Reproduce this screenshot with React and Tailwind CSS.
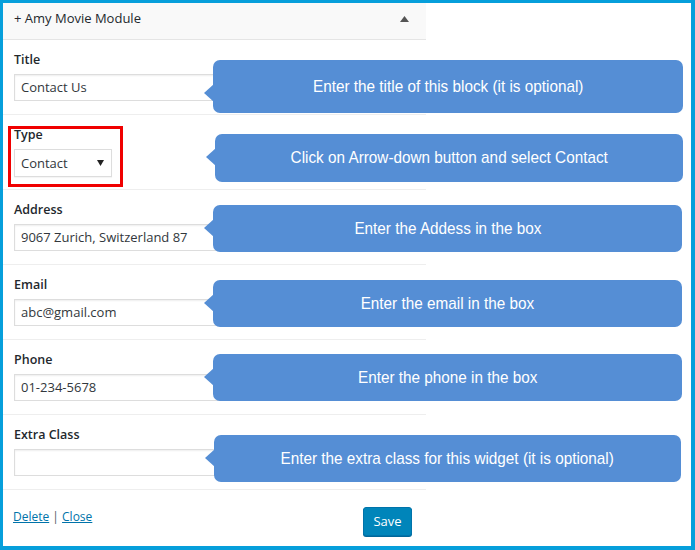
import React from "react";

function Field({ label, children, extra }) {
  return (
    <div className="relative h-[75px] border-b border-[#eeeeee] px-[11px] pt-[11px]">
      <div className="h-[18px] text-[12.5px] font-semibold leading-[18px] text-[#23282d]">{label}</div>
      <div className="mt-[5px]">{children}</div>
      {extra}
    </div>
  );
}

function TextInput({ value }) {
  return (
    <div className="flex h-[27px] w-full items-center border border-[#dddddd] bg-white px-[6px] pt-[1px] text-[13px] text-[#32373c] shadow-[inset_0_1px_2px_rgba(0,0,0,0.07)]">
      {value}
    </div>
  );
}

function Tip({ top }) {
  return (
    <svg className={"absolute left-[-9px] " + top} width="10" height="18" viewBox="0 0 10 18">
      <polygon points="10,0 0,9 10,18" fill="#558ed5" />
    </svg>
  );
}

function BubbleText({ children }) {
  return (
    <span className="inline-block origin-center scale-x-[0.9] whitespace-nowrap text-[17px] text-white [font-family:'Liberation_Sans',Arial,sans-serif]">
      {children}
    </span>
  );
}

export default function App() {
  return (
    <div className="relative h-[550px] w-[695px] overflow-hidden border-b-[4px] border-l-[3px] border-r-[4px] border-t-[3px] border-[#069fdb] bg-white [font-family:'Open_Sans',sans-serif]">
      <div className="flex w-[423px] flex-col">
        <div className="flex h-[37px] items-center justify-between border-b border-[#e5e5e5] bg-[#f9f9f9] pl-[11px] pr-[17px]">
          <span className="mb-[4px] text-[13px] text-[#23282d]">+ Amy Movie Module</span>
          <svg width="9" height="6" viewBox="0 0 9 6" className="mb-[5px]">
            <polygon points="4.5,0 9,6 0,6" fill="#555" />
          </svg>
        </div>
        <Field label="Title">
          <TextInput value="Contact Us" />
        </Field>
        <Field
          label="Type"
          extra={<div className="absolute left-[5px] top-[11px] h-[61px] w-[115px] border-[3px] border-[#f00000]" />}
        >
          <div className="flex h-[28px] w-[98px] items-center justify-between border border-[#dddddd] bg-white pl-[6px] pr-[7px] pt-[2px] text-[13px] text-[#32373c] shadow-[0_1px_1px_rgba(0,0,0,0.04)]">
            <span>Contact</span>
            <svg width="7" height="6" viewBox="0 0 7 6" className="mb-[3px]">
              <polygon points="0,0 7,0 3.5,6" fill="#222" />
            </svg>
          </div>
        </Field>
        <Field label="Address">
          <TextInput value="9067 Zurich, Switzerland 87" />
        </Field>
        <Field label="Email">
          <TextInput value="abc@gmail.com" />
        </Field>
        <Field label="Phone">
          <TextInput value="01-234-5678" />
        </Field>
        <Field label="Extra Class">
          <TextInput value="" />
        </Field>
        <div className="flex items-start justify-between pl-[10px] pr-[14px] pt-[17px]">
          <div className="mt-[1px] text-[12px] text-[#555d66]">
            <a className="text-[#0073aa] underline">Delete</a> | <a className="text-[#0073aa] underline">Close</a>
          </div>
          <button className="h-[29px] w-[49px] rounded-[3px] border border-[#0073aa] bg-[#0085ba] text-[13px] text-white shadow-[0_1px_0_#006799]">
            Save
          </button>
        </div>
      </div>

      <div className="absolute left-[210px] top-[57px] flex h-[53px] w-[470px] items-center justify-center rounded-[7px] bg-[#558ed5]">
        <Tip top="top-[24px]" />
        <BubbleText>Enter the title of this block (it is optional)</BubbleText>
      </div>
      <div className="absolute left-[212px] top-[131px] flex h-[48px] w-[468px] items-center justify-center rounded-[7px] bg-[#558ed5]">
        <Tip top="top-[14px]" />
        <BubbleText>Click on Arrow-down button and select Contact</BubbleText>
      </div>
      <div className="absolute left-[210px] top-[202px] flex h-[47px] w-[469px] items-center justify-center rounded-[7px] bg-[#558ed5]">
        <Tip top="top-[14px]" />
        <BubbleText>Enter the Addess in the box</BubbleText>
      </div>
      <div className="absolute left-[210px] top-[277px] flex h-[47px] w-[469px] items-center justify-center rounded-[7px] bg-[#558ed5]">
        <Tip top="top-[14px]" />
        <BubbleText>Enter the email in the box</BubbleText>
      </div>
      <div className="absolute left-[210px] top-[351px] flex h-[47px] w-[469px] items-center justify-center rounded-[7px] bg-[#558ed5]">
        <Tip top="top-[14px]" />
        <BubbleText>Enter the phone in the box</BubbleText>
      </div>
      <div className="absolute left-[211px] top-[432px] flex h-[47px] w-[467px] items-center justify-center rounded-[7px] bg-[#558ed5]">
        <Tip top="top-[14px]" />
        <BubbleText>Enter the extra class for this widget (it is optional)</BubbleText>
      </div>
    </div>
  );
}
